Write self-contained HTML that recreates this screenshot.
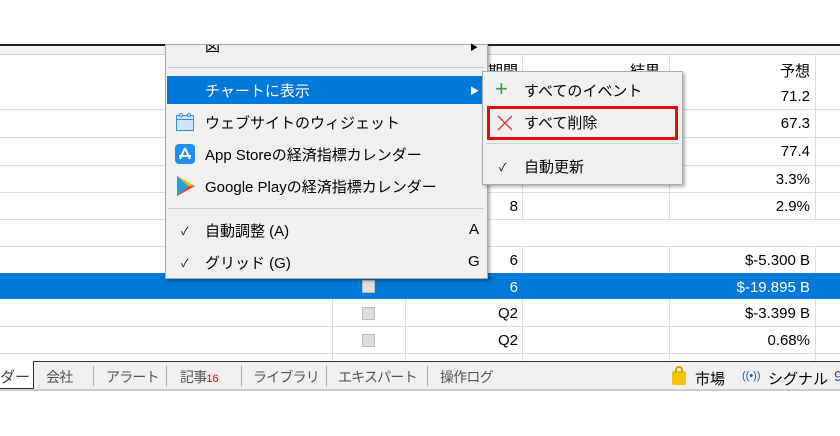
<!DOCTYPE html><html><head><meta charset="utf-8"><style>
*{margin:0;padding:0;box-sizing:border-box}
body{width:840px;height:436px;background:#fff;position:relative;overflow:hidden;font-family:"Liberation Sans","Noto Sans CJK JP",sans-serif;font-size:15px;color:#000}
.a{position:absolute}
.hl{position:absolute;left:0;width:840px;height:1px;background:#ddd}
.vl{position:absolute;width:1px;background:#ddd}
.r{position:absolute;text-align:right}
.cb{position:absolute;left:362px;width:13px;height:13px;background:#ddd;border:1px solid #bbb}
.t{position:absolute;top:367px;color:#555;font-size:14px;letter-spacing:-0.8px}
.s{position:absolute;top:366px;width:1px;height:20px;background:#aaa}
</style></head><body>
<div class="a" style="left:0;top:44px;width:840px;height:2px;background:#222"></div>
<div class="a" style="left:0;top:46px;width:840px;height:8px;background:#f4f4f4"></div>
<div class="hl" style="top:54px;background:#ccc"></div>
<div class="hl" style="top:109px"></div><div class="hl" style="top:137px"></div><div class="hl" style="top:165px"></div><div class="hl" style="top:192px"></div><div class="hl" style="top:219px"></div><div class="hl" style="top:246px"></div><div class="hl" style="top:326px"></div><div class="hl" style="top:353px"></div>
<div class="vl" style="left:332px;top:246px;height:115px"></div>
<div class="vl" style="left:405px;top:246px;height:115px"></div>
<div class="vl" style="left:522px;top:54px;height:165px"></div><div class="vl" style="left:522px;top:246px;height:115px"></div>
<div class="vl" style="left:669px;top:54px;height:165px"></div><div class="vl" style="left:669px;top:246px;height:115px"></div>
<div class="vl" style="left:815px;top:54px;height:165px"></div><div class="vl" style="left:815px;top:246px;height:115px"></div>
<div class="a" style="left:0;top:273px;width:840px;height:26px;background:#0078d7"></div>
<div class="r" style="left:600px;width:210px;top:60px">予想</div>
<div class="r" style="left:550px;width:110px;top:60px">結果</div>
<div class="r" style="left:430px;width:88px;top:60px">期間</div>
<div class="r" style="left:600px;width:210px;top:88px">71.2</div>
<div class="r" style="left:600px;width:210px;top:115px">67.3</div>
<div class="r" style="left:600px;width:210px;top:143px">77.4</div>
<div class="r" style="left:600px;width:210px;top:171px">3.3%</div>
<div class="r" style="left:430px;width:88px;top:198px">8</div>
<div class="r" style="left:600px;width:210px;top:198px">2.9%</div>
<div class="r" style="left:430px;width:88px;top:252px">6</div>
<div class="r" style="left:600px;width:210px;top:252px">$-5.300 B</div>
<div class="r" style="left:430px;width:88px;top:279px;color:#fff">6</div>
<div class="r" style="left:600px;width:210px;top:279px;color:#fff">$-19.895 B</div>
<div class="cb" style="top:280px"></div>
<div class="r" style="left:430px;width:88px;top:305px">Q2</div>
<div class="r" style="left:600px;width:210px;top:305px">$-3.399 B</div>
<div class="cb" style="top:307px"></div>
<div class="r" style="left:430px;width:88px;top:332px">Q2</div>
<div class="r" style="left:600px;width:210px;top:332px">0.68%</div>
<div class="cb" style="top:334px"></div>
<!-- tab bar -->
<div class="a" style="left:0;top:361px;width:840px;height:30px;background:#f0f0f0;border-top:1px solid #333;border-bottom:2px solid #ccc"></div>
<div class="a" style="left:0;top:361px;width:34px;height:28px;background:#fff;border:1px solid #333;border-top:none;border-left:none;padding:5px 0 0 0;color:#444">ダー</div>
<div class="t" style="left:46px">会社</div><div class="s" style="left:93px"></div>
<div class="t" style="left:106px">アラート</div><div class="s" style="left:166px"></div>
<div class="t" style="left:180px">記事<span style="color:#e00;font-size:11px;letter-spacing:0">16</span></div><div class="s" style="left:241px"></div>
<div class="t" style="left:253px">ライブラリ</div><div class="s" style="left:326px"></div>
<div class="t" style="left:338px">エキスパート</div><div class="s" style="left:427px"></div>
<div class="t" style="left:440px">操作ログ</div>
<div class="a" style="left:672px;top:371px;width:14px;height:14px;background:#f3c300;border-radius:2px"></div>
<div class="a" style="left:675px;top:366px;width:8px;height:7px;border:2px solid #d9a000;border-bottom:none;border-radius:4px 4px 0 0"></div>
<div class="a" style="left:695px;top:368px">市場</div>
<div class="a" style="left:742px;top:370px;color:#1a5fa8;font-size:11px">((•))</div>
<div class="a" style="left:768px;top:368px">シグナル</div>
<div class="a" style="left:834px;top:368px;color:#1a5fa8">9</div>
<!-- menu -->
<div class="a" style="left:165px;top:44px;width:323px;height:235px;background:#f0f0f0;border:1px solid #aaa;box-shadow:2px 2px 3px rgba(0,0,0,.3);overflow:hidden">
<div class="a" style="left:39px;top:-10px">図</div>
</div>
<div class="a" style="left:470px;top:42px;font-size:8px">▶</div>
<div class="a" style="left:168px;top:67px;width:316px;height:1px;background:#ccc"></div>
<div class="a" style="left:167px;top:76px;width:320px;height:28px;background:#0078d7"></div>
<div class="a" style="left:205px;top:80px;color:#fff">チャートに表示</div>
<div class="a" style="left:470px;top:84px;color:#fff;font-size:9px">▶</div>
<svg class="a" style="left:175px;top:112px" width="20" height="20"><rect x="1.5" y="3.5" width="17" height="15" fill="#cfe3f7" stroke="#3b8ad8"/><line x1="1.5" y1="7.5" x2="18.5" y2="7.5" stroke="#3b8ad8"/><circle cx="6" cy="3" r="1.5" fill="#fff" stroke="#3b8ad8"/><circle cx="14" cy="3" r="1.5" fill="#fff" stroke="#3b8ad8"/></svg>
<div class="a" style="left:205px;top:112px">ウェブサイトのウィジェット</div>
<svg class="a" style="left:175px;top:144px" width="20" height="20"><rect width="20" height="20" rx="4" fill="#1e8ef0"/><path d="M10 4L5 15M10 4l5 11M4 12h12" stroke="#fff" stroke-width="2" fill="none"/></svg>
<div class="a" style="left:205px;top:144px">App Storeの経済指標カレンダー</div>
<svg class="a" style="left:176px;top:175px" width="20" height="22"><path d="M1 1L19 11L1 21Z" fill="#2fbf71"/><path d="M1 1L12 11L1 21Z" fill="#1ea0e6"/><path d="M12 11L19 11L1 21Z" fill="#e84335"/><path d="M12 11L1 1L19 11Z" fill="#fbbc05" opacity=".9"/></svg>
<div class="a" style="left:205px;top:176px">Google Playの経済指標カレンダー</div>
<div class="a" style="left:168px;top:208px;width:316px;height:1px;background:#ccc"></div>
<div class="a" style="left:181px;top:223px;font-size:11px">✓</div>
<div class="a" style="left:205px;top:220px">自動調整 (A)</div>
<div class="a" style="left:469px;top:221px">A</div>
<div class="a" style="left:181px;top:255px;font-size:11px">✓</div>
<div class="a" style="left:205px;top:252px">グリッド (G)</div>
<div class="a" style="left:468px;top:253px">G</div>
<!-- submenu -->
<div class="a" style="left:482px;top:71px;width:201px;height:114px;background:#f0f0f0;border:1px solid #aaa;box-shadow:2px 2px 3px rgba(0,0,0,.3)"></div>
<div class="a" style="left:495px;top:76px;color:#2ea043;font-size:22px;line-height:26px">+</div>
<div class="a" style="left:524px;top:80px">すべてのイベント</div>
<div class="a" style="left:487px;top:106px;width:191px;height:34px;border:3px solid #e01010"></div>
<svg class="a" style="left:497px;top:115px" width="16" height="16"><path d="M1 1L15 15M15 1L1 15" stroke="#e04040" stroke-width="1.5"/></svg>
<div class="a" style="left:524px;top:112px">すべて削除</div>
<div class="a" style="left:486px;top:143px;width:193px;height:1px;background:#ccc"></div>
<div class="a" style="left:499px;top:159px;font-size:11px">✓</div>
<div class="a" style="left:524px;top:156px">自動更新</div>
</body></html>
